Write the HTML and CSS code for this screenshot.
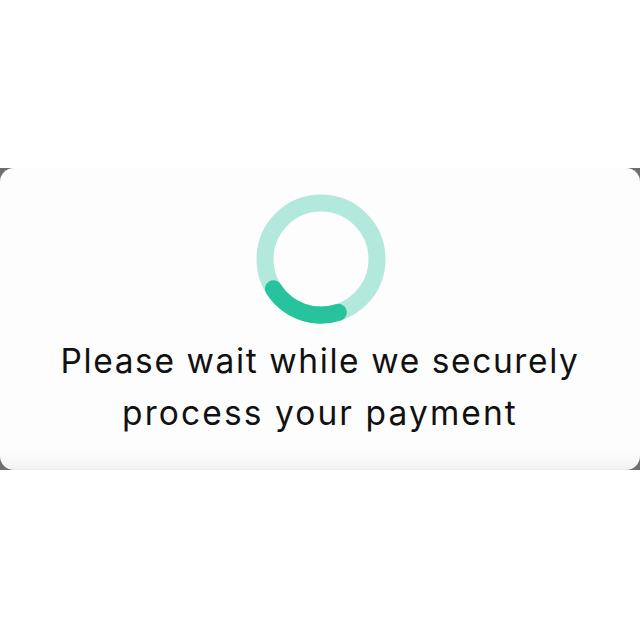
FILE: index.html
```html
<!DOCTYPE html>
<html>
<head>
<meta charset="utf-8">
<link rel="stylesheet" href="styles.css">
</head>
<body>
<div class="band">
  <div class="card">
    <svg class="spinner" width="132" height="132" viewBox="0 0 132 132">
      <circle cx="66" cy="66" r="56" fill="none" stroke="#b2e9dc" stroke-width="17"/>
      <path d="M 83.3 119.3 A 56 56 0 0 1 18.5 95.7" fill="none" stroke="#27c39c" stroke-width="17" stroke-linecap="round"/>
    </svg>
    <p class="msg">Please wait while we securely<br><span class="line2">process your payment</span></p>
  </div>
</div>
</body>
</html>
```
FILE: styles.css
```css
html, body {
  margin: 0;
  padding: 0;
  background: #ffffff;
}
.band {
  margin-top: 168px;
  height: 302px;
  background: #6e6e6e;
}
.card {
  height: 302px;
  box-sizing: border-box;
  border-radius: 14px;
  background: linear-gradient(to bottom, #fdfdfd 0%, #fdfdfd 94%, #f3f3f3 99.5%, #e9e9e9 100%);
  display: flex;
  flex-direction: column;
  align-items: center;
  padding-top: 25px;
}
.spinner {
  display: block;
  margin-left: 2px;
}
.msg {
  margin: 10px 0 0 0;
  font-family: Inter, "Open Sans", sans-serif;
  font-size: 33.5px;
  letter-spacing: 1.6px;
  line-height: 52px;
  color: #111111;
  text-align: center;
}
.line2 {
  letter-spacing: 2.1px;
}
```
